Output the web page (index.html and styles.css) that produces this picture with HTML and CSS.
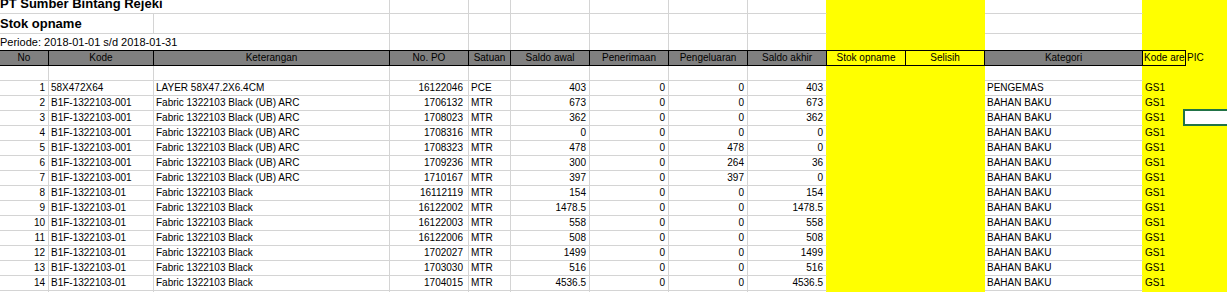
FILE: index.html
```html
<!DOCTYPE html>
<html>
<head>
<meta charset="utf-8">
<title>Stok opname</title>
<link rel="stylesheet" href="styles.css">
</head>
<body>
<div class="sheet">
  <div class="row row1">
    <div class="c span3"><span class="title">PT Sumber Bintang Rejeki</span></div>
    <div class="c"></div><div class="c"></div><div class="c"></div><div class="c"></div><div class="c"></div><div class="c ey"></div>
    <div class="c y"></div><div class="c y"></div><div class="c ey"></div><div class="c y"></div><div class="c y"></div>
  </div>
  <div class="row row2">
    <div class="c span2"><span class="sub">Stok opname</span></div><div class="c"></div>
    <div class="c"></div><div class="c"></div><div class="c"></div><div class="c"></div><div class="c"></div><div class="c ey"></div>
    <div class="c y"></div><div class="c y"></div><div class="c ey"></div><div class="c y"></div><div class="c y"></div>
  </div>
  <div class="row row3">
    <div class="c span3 period">Periode: 2018-01-01 s/d 2018-01-31</div>
    <div class="c"></div><div class="c"></div><div class="c"></div><div class="c"></div><div class="c"></div><div class="c ey"></div>
    <div class="c y"></div><div class="c y"></div><div class="c ey"></div><div class="c y"></div><div class="c y"></div>
  </div>
  <div class="row hd">
    <div class="c">No</div><div class="c">Kode</div><div class="c">Keterangan</div><div class="c">No. PO</div><div class="c">Satuan</div>
    <div class="c">Saldo awal</div><div class="c">Penerimaan</div><div class="c">Pengeluaran</div><div class="c">Saldo akhir</div>
    <div class="c y">Stok opname</div><div class="c y">Selisih</div><div class="c">Kategori</div>
    <div class="c y clip">Kode area</div><div class="c y pic">PIC</div>
  </div>
  <div class="row">
    <div class="c"></div><div class="c"></div><div class="c"></div><div class="c"></div><div class="c"></div><div class="c"></div><div class="c"></div><div class="c"></div><div class="c ey"></div>
    <div class="c y"></div><div class="c y"></div><div class="c ey"></div><div class="c y"></div><div class="c y"></div>
  </div>

  <div class="row">
    <div class="c r">1</div><div class="c">58X472X64</div><div class="c">LAYER 58X47.2X6.4CM</div><div class="c r po">16122046</div><div class="c">PCE</div>
    <div class="c r">403</div><div class="c r">0</div><div class="c r">0</div><div class="c r ey">403</div>
    <div class="c y"></div><div class="c y"></div><div class="c ey">PENGEMAS</div><div class="c y">GS1</div><div class="c y"></div>
  </div>
  <div class="row">
    <div class="c r">2</div><div class="c">B1F-1322103-001</div><div class="c">Fabric 1322103 Black (UB) ARC</div><div class="c r po">1706132</div><div class="c">MTR</div>
    <div class="c r">673</div><div class="c r">0</div><div class="c r">0</div><div class="c r ey">673</div>
    <div class="c y"></div><div class="c y"></div><div class="c ey">BAHAN BAKU</div><div class="c y">GS1</div><div class="c y"></div>
  </div>
  <div class="row">
    <div class="c r">3</div><div class="c">B1F-1322103-001</div><div class="c">Fabric 1322103 Black (UB) ARC</div><div class="c r po">1708023</div><div class="c">MTR</div>
    <div class="c r">362</div><div class="c r">0</div><div class="c r">0</div><div class="c r ey">362</div>
    <div class="c y"></div><div class="c y"></div><div class="c ey">BAHAN BAKU</div><div class="c y">GS1</div><div class="c y sel"></div>
  </div>
  <div class="row">
    <div class="c r">4</div><div class="c">B1F-1322103-001</div><div class="c">Fabric 1322103 Black (UB) ARC</div><div class="c r po">1708316</div><div class="c">MTR</div>
    <div class="c r">0</div><div class="c r">0</div><div class="c r">0</div><div class="c r ey">0</div>
    <div class="c y"></div><div class="c y"></div><div class="c ey">BAHAN BAKU</div><div class="c y">GS1</div><div class="c y"></div>
  </div>
  <div class="row">
    <div class="c r">5</div><div class="c">B1F-1322103-001</div><div class="c">Fabric 1322103 Black (UB) ARC</div><div class="c r po">1708323</div><div class="c">MTR</div>
    <div class="c r">478</div><div class="c r">0</div><div class="c r">478</div><div class="c r ey">0</div>
    <div class="c y"></div><div class="c y"></div><div class="c ey">BAHAN BAKU</div><div class="c y">GS1</div><div class="c y"></div>
  </div>
  <div class="row">
    <div class="c r">6</div><div class="c">B1F-1322103-001</div><div class="c">Fabric 1322103 Black (UB) ARC</div><div class="c r po">1709236</div><div class="c">MTR</div>
    <div class="c r">300</div><div class="c r">0</div><div class="c r">264</div><div class="c r ey">36</div>
    <div class="c y"></div><div class="c y"></div><div class="c ey">BAHAN BAKU</div><div class="c y">GS1</div><div class="c y"></div>
  </div>
  <div class="row">
    <div class="c r">7</div><div class="c">B1F-1322103-001</div><div class="c">Fabric 1322103 Black (UB) ARC</div><div class="c r po">1710167</div><div class="c">MTR</div>
    <div class="c r">397</div><div class="c r">0</div><div class="c r">397</div><div class="c r ey">0</div>
    <div class="c y"></div><div class="c y"></div><div class="c ey">BAHAN BAKU</div><div class="c y">GS1</div><div class="c y"></div>
  </div>
  <div class="row">
    <div class="c r">8</div><div class="c">B1F-1322103-01</div><div class="c">Fabric 1322103 Black</div><div class="c r po">16112119</div><div class="c">MTR</div>
    <div class="c r">154</div><div class="c r">0</div><div class="c r">0</div><div class="c r ey">154</div>
    <div class="c y"></div><div class="c y"></div><div class="c ey">BAHAN BAKU</div><div class="c y">GS1</div><div class="c y"></div>
  </div>
  <div class="row">
    <div class="c r">9</div><div class="c">B1F-1322103-01</div><div class="c">Fabric 1322103 Black</div><div class="c r po">16122002</div><div class="c">MTR</div>
    <div class="c r">1478.5</div><div class="c r">0</div><div class="c r">0</div><div class="c r ey">1478.5</div>
    <div class="c y"></div><div class="c y"></div><div class="c ey">BAHAN BAKU</div><div class="c y">GS1</div><div class="c y"></div>
  </div>
  <div class="row">
    <div class="c r">10</div><div class="c">B1F-1322103-01</div><div class="c">Fabric 1322103 Black</div><div class="c r po">16122003</div><div class="c">MTR</div>
    <div class="c r">558</div><div class="c r">0</div><div class="c r">0</div><div class="c r ey">558</div>
    <div class="c y"></div><div class="c y"></div><div class="c ey">BAHAN BAKU</div><div class="c y">GS1</div><div class="c y"></div>
  </div>
  <div class="row">
    <div class="c r">11</div><div class="c">B1F-1322103-01</div><div class="c">Fabric 1322103 Black</div><div class="c r po">16122006</div><div class="c">MTR</div>
    <div class="c r">508</div><div class="c r">0</div><div class="c r">0</div><div class="c r ey">508</div>
    <div class="c y"></div><div class="c y"></div><div class="c ey">BAHAN BAKU</div><div class="c y">GS1</div><div class="c y"></div>
  </div>
  <div class="row">
    <div class="c r">12</div><div class="c">B1F-1322103-01</div><div class="c">Fabric 1322103 Black</div><div class="c r po">1702027</div><div class="c">MTR</div>
    <div class="c r">1499</div><div class="c r">0</div><div class="c r">0</div><div class="c r ey">1499</div>
    <div class="c y"></div><div class="c y"></div><div class="c ey">BAHAN BAKU</div><div class="c y">GS1</div><div class="c y"></div>
  </div>
  <div class="row">
    <div class="c r">13</div><div class="c">B1F-1322103-01</div><div class="c">Fabric 1322103 Black</div><div class="c r po">1703030</div><div class="c">MTR</div>
    <div class="c r">516</div><div class="c r">0</div><div class="c r">0</div><div class="c r ey">516</div>
    <div class="c y"></div><div class="c y"></div><div class="c ey">BAHAN BAKU</div><div class="c y">GS1</div><div class="c y"></div>
  </div>
  <div class="row">
    <div class="c r">14</div><div class="c">B1F-1322103-01</div><div class="c">Fabric 1322103 Black</div><div class="c r po">1704015</div><div class="c">MTR</div>
    <div class="c r">4536.5</div><div class="c r">0</div><div class="c r">0</div><div class="c r ey">4536.5</div>
    <div class="c y"></div><div class="c y"></div><div class="c ey">BAHAN BAKU</div><div class="c y">GS1</div><div class="c y"></div>
  </div>
  <div class="row">
    <div class="c"></div><div class="c"></div><div class="c"></div><div class="c"></div><div class="c"></div><div class="c"></div><div class="c"></div><div class="c"></div><div class="c ey"></div>
    <div class="c y"></div><div class="c y"></div><div class="c ey"></div><div class="c y"></div><div class="c y"></div>
  </div>
</div>
</body>
</html>
```

FILE: styles.css
```css
* { box-sizing: border-box; }
html, body { margin: 0; padding: 0; background: #fff; }
body {
  width: 1227px;
  height: 292px;
  overflow: hidden;
  font-family: "Liberation Sans", Arial, sans-serif;
  font-size: 10px;
  color: #000;
}
.sheet { display: flex; flex-direction: column; }
.row {
  display: grid;
  grid-template-columns: 49px 105px 236px 79px 42px 79px 79px 79px 79px 79px 79px 158px 43px 1fr;
  height: 15px;
  flex: none;
}
.c {
  border-right: 1px solid #d4d4d4;
  border-bottom: 1px solid #d4d4d4;
  padding: 0 2px;
  line-height: 14px;
  white-space: nowrap;
  overflow: hidden;
}
.r { text-align: right; padding-right: 3px; }
.po { padding-right: 5px; }
.y { background: #ffff00; border-color: #ffff00; }
.ey { border-right-color: #ffff00; }
.span3 { grid-column: span 3; }
.span2 { grid-column: span 2; }

.row1 { height: 14px; }
.row1 .span3 { padding: 0; }
.title {
  display: block;
  margin-top: -4px;
  font-size: 13px;
  line-height: 15px;
  font-weight: bold;
}
.row2 { height: 20px; }
.row2 .span2 { padding: 0; }
.sub {
  display: block;
  font-size: 13px;
  line-height: 19px;
  font-weight: bold;
}
.row3 { height: 16px; }
.row3 .c { border-bottom: 0; }
.period {
  padding: 0;
  font-size: 11px;
  line-height: 16px;
}

.hd { height: 16px; }
.hd .c {
  border-top: 1px solid #000;
  border-bottom: 1px solid #000;
  border-right: 1px solid #000;
  background: #808080;
  text-align: center;
  padding: 0 1px;
}
.hd .c.y { background: #ffff00; }
.hd .c.clip { text-align: left; overflow: hidden; text-overflow: clip; }
.hd .c.pic {
  border-color: #ffff00;
  text-align: left;
}

.sel { position: relative; overflow: visible; }
.sel::after {
  content: "";
  position: absolute;
  left: -3px;
  top: -2px;
  right: -10px;
  bottom: -1px;
  border: 2px solid #217346;
  background: #fff;
}
```
